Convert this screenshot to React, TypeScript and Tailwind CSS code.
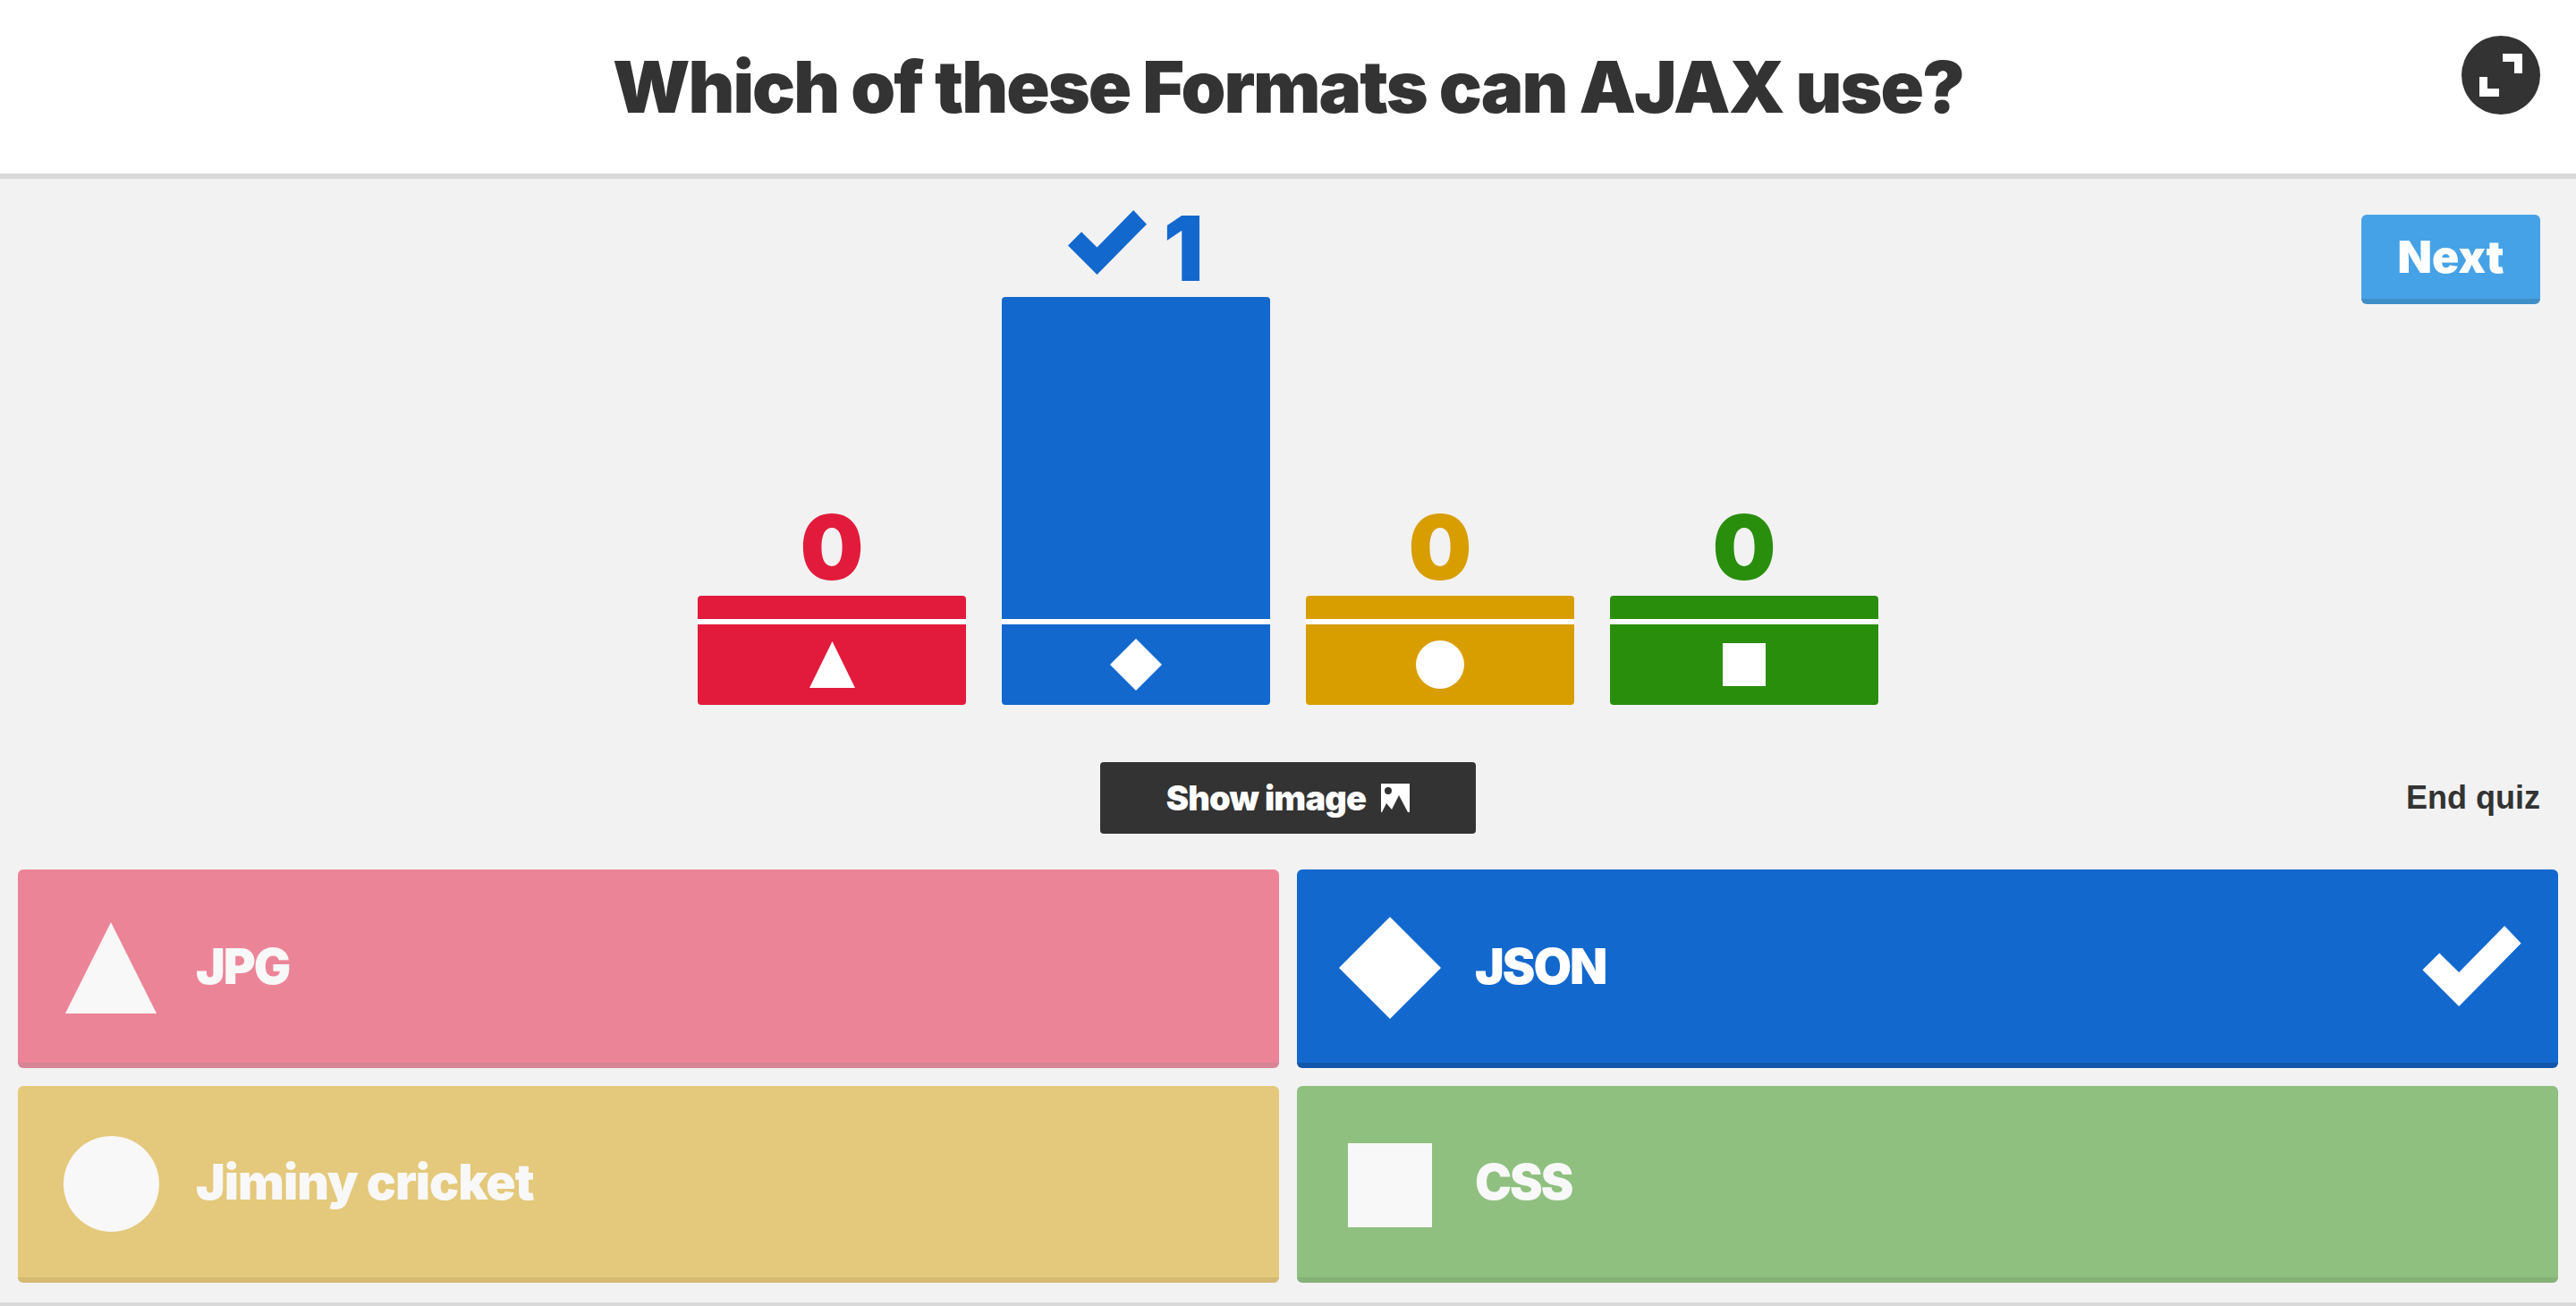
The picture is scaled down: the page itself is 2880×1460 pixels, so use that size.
import type { ReactNode } from 'react'

const font = "font-['Inter','Liberation_Sans',sans-serif]"

function Check({ className }: { className: string }) {
  return (
    <svg viewBox="0 0 333 272" className={className}>
      <polygon points="277,0 333,59 123,272 0,149 57,92 123,157" fill="currentColor" />
    </svg>
  )
}

function Triangle({ className }: { className: string }) {
  return (
    <svg viewBox="0 0 100 100" preserveAspectRatio="none" className={className}>
      <polygon points="50,0 100,100 0,100" fill="currentColor" />
    </svg>
  )
}

function Diamond({ className }: { className: string }) {
  return (
    <svg viewBox="0 0 100 100" className={className}>
      <polygon points="50,0 100,50 50,100 0,50" fill="currentColor" />
    </svg>
  )
}

function Bar({ count, color, text, height, correct, children }: {
  count: string
  color: string
  text: string
  height: string
  correct?: boolean
  children: ReactNode
}) {
  return (
    <div className="w-[300px] flex flex-col items-center">
      <div className={`flex items-center justify-center gap-[18px] h-[72px] mb-[18px] text-[100px] leading-none font-black ${text}`}>
        {correct && <Check className="w-[88px] h-[72px] -translate-y-[7px]" />}
        <span>{count}</span>
      </div>
      <div className={`w-full flex flex-col rounded-[4px] overflow-hidden ${height}`}>
        <div className={`flex-1 ${color}`} />
        <div className="h-[6px] bg-white" />
        <div className={`h-[90px] flex items-center justify-center text-white ${color}`}>{children}</div>
      </div>
    </div>
  )
}

function Answer({ label, color, height, text, tracking = 'tracking-[-2px]', correct, children }: {
  label: string
  color: string
  height: string
  text: string
  tracking?: string
  correct?: boolean
  children: ReactNode
}) {
  return (
    <div className={`flex items-center rounded-[6px] border-b-[6px] ${height} ${color} ${text}`}>
      <div className="w-[199px] shrink-0 pl-[9px] pt-[4px] flex items-center justify-center">{children}</div>
      <span className={`flex-1 text-[55px] leading-none font-black ${tracking}`}>{label}</span>
      {correct && <Check className="w-[111px] h-[90px] mr-[41px]" />}
    </div>
  )
}

export default function App() {
  return (
    <div className={`w-[2880px] h-[1460px] flex flex-col bg-[#f2f2f2] overflow-hidden ${font}`}>
      <header className="relative h-[200px] shrink-0 flex items-center justify-center bg-white border-b-[6px] border-[#d9d9d9]">
        <h1 className="text-[80px] leading-none font-black tracking-[-2px] text-[#333333]">Which of these Formats can AJAX use?</h1>
        <button className="absolute top-[40px] right-[40px] w-[88px] h-[88px] rounded-full bg-[#333333]">
          <svg viewBox="0 0 88 88" className="w-full h-full">
            <path d="M46 20H68V42H59V29H46Z" fill="#fff" />
            <path d="M20 46H29V59H42V68H20Z" fill="#fff" />
          </svg>
        </button>
      </header>

      <main className="flex-1 flex flex-col">
        <section className="h-[588px] shrink-0 pt-[34px] grid grid-cols-[1fr_1320px_1fr]">
          <div />
          <div className="flex items-end justify-between">
            <Bar count="0" color="bg-[#e21b3c]" text="text-[#e21b3c]" height="h-[122px]">
              <Triangle className="w-[51px] h-[52px]" />
            </Bar>
            <Bar count="1" color="bg-[#1368ce]" text="text-[#1368ce]" height="h-[456px]" correct>
              <Diamond className="w-[58px] h-[58px]" />
            </Bar>
            <Bar count="0" color="bg-[#d89e00]" text="text-[#d89e00]" height="h-[122px]">
              <div className="w-[54px] h-[54px] rounded-full bg-white" />
            </Bar>
            <Bar count="0" color="bg-[#2a8e0d]" text="text-[#2a8e0d]" height="h-[122px]">
              <div className="w-[48px] h-[48px] bg-white" />
            </Bar>
          </div>
          <div className="flex justify-end pr-[40px] pt-[6px] items-start">
            <button className="w-[200px] h-[100px] rounded-[6px] border-b-[6px] border-[#3e8fc6] bg-[#46a2e6] text-white text-[50px] leading-none font-black">Next</button>
          </div>
        </section>

        <section className="h-[80px] mt-[64px] shrink-0 relative flex items-center justify-center">
          <button className="w-[420px] h-[80px] rounded-[4px] bg-[#333333] text-white flex items-center justify-center gap-[17px] text-[38px] leading-none font-black tracking-[-0.8px]">
            Show image
            <svg viewBox="0 0 32 32" className="w-[32px] h-[32px]">
              <path fillRule="evenodd" d="M0 0H32V32H30L20 13L12 29L6 22L1 32H0ZM8 4A4 4 0 1 0 8 12A4 4 0 1 0 8 4Z" fill="#fff" />
            </svg>
          </button>
          <span className="absolute right-[40px] text-[36px] leading-none font-bold text-[#333333] font-['Liberation_Sans',sans-serif]">End quiz</span>
        </section>

        <section className="mt-[40px] px-[20px] grid grid-cols-2 gap-x-[20px] gap-y-[20px]">
          <Answer label="JPG" color="bg-[#ec8498] border-[#d68496]" height="h-[222px]" text="text-[#f8f8f8]">
            <Triangle className="w-[102px] h-[102px]" />
          </Answer>
          <Answer label="JSON" color="bg-[#1368ce] border-[#1156ab]" height="h-[222px]" text="text-white" correct>
            <Diamond className="w-[114px] h-[114px]" />
          </Answer>
          <Answer label="Jiminy cricket" color="bg-[#e4c87b] border-[#d3b971]" height="h-[220px]" text="text-[#f8f8f8]" tracking="tracking-[-1px]">
            <div className="w-[107px] h-[107px] rounded-full bg-[#f8f8f8]" />
          </Answer>
          <Answer label="CSS" color="bg-[#8fc080] border-[#85b278]" height="h-[220px]" text="text-[#f8f8f8]">
            <div className="w-[94px] h-[94px] mt-[4px] bg-[#f8f8f8]" />
          </Answer>
        </section>
      </main>

      <div className="h-[4px] shrink-0 bg-[#d9d9d9]" />
    </div>
  )
}
